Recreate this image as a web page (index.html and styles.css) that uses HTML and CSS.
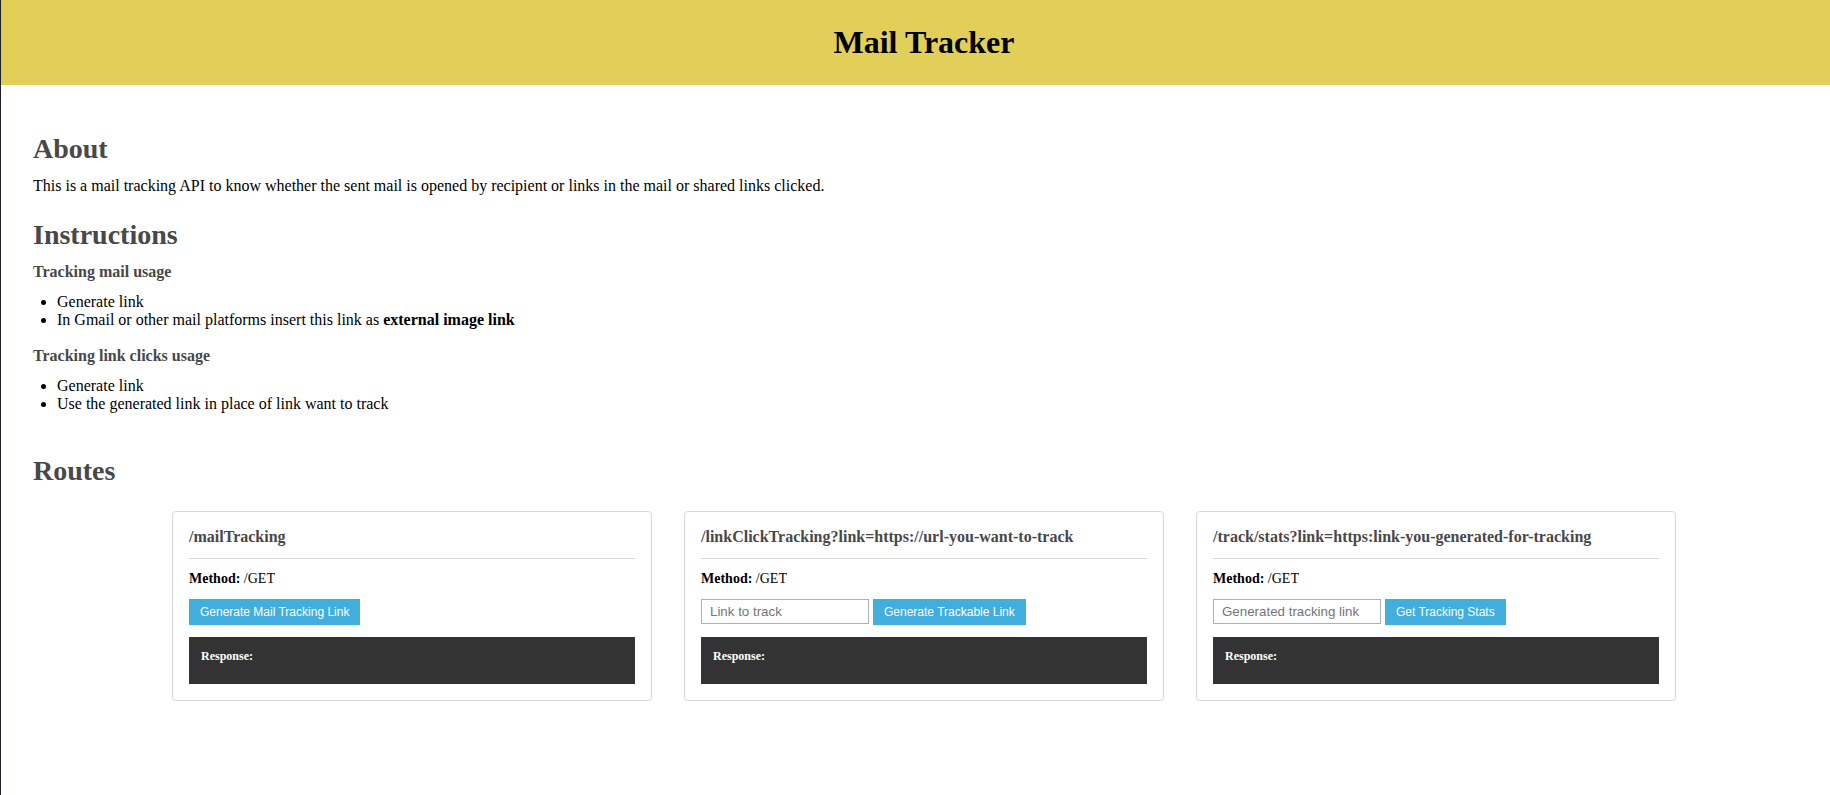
FILE: index.html
```html
<!DOCTYPE html>
<html lang="en">
<head>
<meta charset="utf-8">
<title>Mail Tracker</title>
<link rel="stylesheet" href="styles.css">
</head>
<body>
<header class="header"><h1 class="header-title">Mail Tracker</h1></header>
<main class="main">
  <section class="section">
    <h2 class="heading">About</h2>
    <p class="text">This is a mail tracking API to know whether the sent mail is opened by recipient or links in the mail or shared links clicked.</p>
  </section>
  <section class="section">
    <h2 class="heading">Instructions</h2>
    <h4 class="subheading">Tracking mail usage</h4>
    <ul class="list">
      <li>Generate link</li>
      <li>In Gmail or other mail platforms insert this link as <b>external image link</b></li>
    </ul>
    <h4 class="subheading">Tracking link clicks usage</h4>
    <ul class="list">
      <li>Generate link</li>
      <li>Use the generated link in place of link want to track</li>
    </ul>
  </section>
  <section class="routes">
    <h2 class="heading">Routes</h2>
    <div class="cards">
      <article class="card">
        <h4 class="card-title">/mailTracking</h4>
        <p class="method"><b>Method:</b> /GET</p>
        <form class="controls">
          <button class="button" type="button">Generate Mail Tracking Link</button>
        </form>
        <div class="response"><b>Response:</b></div>
      </article>
      <article class="card">
        <h4 class="card-title">/linkClickTracking?link=https://url-you-want-to-track</h4>
        <p class="method"><b>Method:</b> /GET</p>
        <form class="controls">
          <input class="input" type="text" placeholder="Link to track" aria-label="Link to track">
          <button class="button" type="button">Generate Trackable Link</button>
        </form>
        <div class="response"><b>Response:</b></div>
      </article>
      <article class="card">
        <h4 class="card-title">/track/stats?link=https:link-you-generated-for-tracking</h4>
        <p class="method"><b>Method:</b> /GET</p>
        <form class="controls">
          <input class="input" type="text" placeholder="Generated tracking link" aria-label="Generated tracking link">
          <button class="button" type="button">Get Tracking Stats</button>
        </form>
        <div class="response"><b>Response:</b></div>
      </article>
    </div>
  </section>
</main>
</body>
</html>
```
FILE: styles.css
```css
* {
  box-sizing: border-box;
  margin: 0;
  padding: 0;
}

body {
  min-height: 100vh;
  border-left: 1px solid #1b1f2a;
  background: #fff;
  color: #000;
  font-family: "Liberation Serif", "Times New Roman", serif;
  font-size: 16px;
  line-height: 18px;
}

.header {
  padding: 24px 15px 24px 32px;
  background: #e1cf59;
  text-align: center;
}

.header-title {
  font-size: 32px;
  line-height: 37px;
}

.main {
  padding: 48px 15px 48px 32px;
}

.section {
  margin-bottom: 24px;
}

.heading {
  margin-bottom: 12px;
  color: #484848;
  font-size: 28px;
  line-height: 32px;
}

.subheading {
  margin-bottom: 12px;
  color: #484848;
  font-size: 16px;
}

.list {
  margin-bottom: 18px;
  padding-left: 24px;
}

.routes {
  padding-top: 18px;
}

.cards {
  display: flex;
  flex-wrap: wrap;
  justify-content: center;
  gap: 32px;
  margin-top: 24px;
}

.card {
  width: 480px;
  padding: 16px;
  border: 1px solid #d5d6d6;
  border-radius: 4px;
}

.card-title {
  margin-bottom: 12px;
  padding-bottom: 12px;
  border-bottom: 1px solid #d5d6d6;
  color: #484848;
  font-size: 16px;
}

.method {
  margin-bottom: 12px;
  font-size: 14px;
  line-height: 16px;
}

.controls {
  display: flex;
  align-items: flex-start;
  gap: 4px;
  margin-bottom: 12px;
}

.input {
  width: 168px;
  height: 25px;
  padding: 4px 8px;
  border: 1px solid #b0b0b0;
  font-family: "Liberation Sans", Arial, sans-serif;
}

.input::placeholder {
  color: #757575;
}

.button {
  padding: 6px 11px;
  border: 0;
  background: #41aede;
  color: #fff;
  font-family: "Liberation Sans", Arial, sans-serif;
  font-size: 12px;
  line-height: 14px;
}

.response {
  min-height: 47px;
  padding: 12px;
  background: #333;
  color: #fff;
  font-size: 12px;
  line-height: 14px;
}
```
